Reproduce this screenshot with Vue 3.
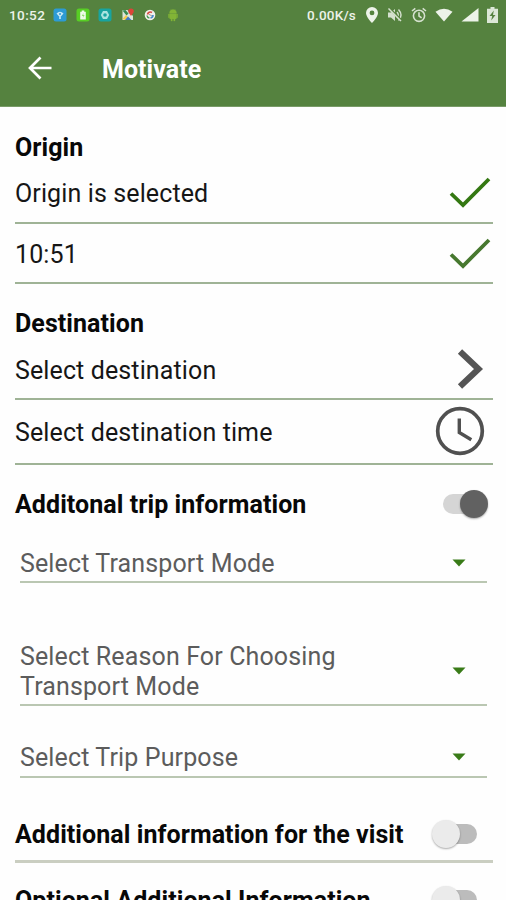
<script setup>
const selects = [
  { key: 'mode', lines: ['Select Transport Mode'] },
  { key: 'reason', lines: ['Select Reason For Choosing', 'Transport Mode'] },
  { key: 'purpose', lines: ['Select Trip Purpose'] }
]
</script>

<template>
  <div class="screen">
    <header class="appbar">
      <div class="status">
        <span class="clock">10:52</span>
        <div class="apps">
          <svg width="14" height="14" viewBox="0 0 14 14"><rect x=".5" y=".5" width="13" height="13" rx="2.5" fill="#2d9bd5" /><path d="M3.5 5.5Q7 2 10.5 5.5L7 9.5Z" fill="#c7e9f7" /><circle cx="7" cy="6" r="1" fill="#2d9bd5" /><path d="M6 9h2v2H6z" fill="#a5dcf3" /></svg>
          <svg width="14" height="14" viewBox="0 0 14 14"><rect x=".5" y=".5" width="13" height="13" rx="2.5" fill="#58ce25" /><path d="M5.7 2.5h2.6v1.2h1.5v7.8H4.2V3.7h1.5z" fill="#effbe9" /><path d="M7.5 5L5.8 8h1.5L6.8 10 8.6 7H7.2z" fill="#8fdc6c" /></svg>
          <svg width="14" height="14" viewBox="0 0 14 14"><rect x=".5" y=".5" width="13" height="13" rx="2.5" fill="#18a4a0" /><path d="M5 3h4l2.2 4L9 11H5L2.8 7z" fill="#a9e4df" /><circle cx="7" cy="7" r="1.8" fill="#18a4a0" /></svg>
          <svg width="14" height="14" viewBox="0 0 14 14"><path d="M1.5 2h5L12 8v4H1.5z" fill="#dce4d9" /><path d="M1.5 2.5l3-.5 3 3.5-2 2z" fill="#378b50" /><path d="M1.5 11l3.5-4 2 2-2.5 3z" fill="#f2ca4c" /><path d="M4 12l3-3.5 3.5 3.5z" fill="#3e78c5" /><path d="M10 8C8 5 7.2 4.4 7.2 3.3a2.8 2.8 0 015.6 0c0 1.3-.8 1.7-2.8 4.7z" fill="#db4439" /></svg>
          <svg width="14" height="14" viewBox="0 0 14 14"><circle cx="7" cy="7" r="5.3" fill="#f1f0eb" /><path d="M4.5 6.5a3 3 0 014.5-2" fill="none" stroke="#d84b45" stroke-width="1.6" /><path d="M10 7a3 3 0 01-2.5 3" fill="none" stroke="#468bcb" stroke-width="1.6" /><path d="M4 7.5A3 3 0 006.4 10" fill="none" stroke="#459b58" stroke-width="1.5" /><path d="M6 6.3l3 1.7" stroke="#999" /></svg>
          <svg width="14" height="14" viewBox="0 0 14 14"><path d="M3.5 5a3.5 3.5 0 017 0zM3.5 5.6h7V10q0 1-1 1H9v2H7.7v-2H6.3v2H5v-2h-.5q-1 0-1-1zM2.4 6h.8v3.7h-.8zM10.8 6h.8v3.7h-.8zM4.6 1l.8 1.5M9.4 1l-.8 1.5" fill="#82b436" stroke="#82b436" stroke-width=".3" /></svg>
        </div>
        <span class="rate">0.00K/s</span>
        <div class="system">
          <svg width="14" height="18" viewBox="0 0 14 18"><path fill-rule="evenodd" d="M7 1a6 6 0 00-6 6c0 4 6 10 6 10s6-6 6-10a6 6 0 00-6-6zm0 3.5a2.4 2.4 0 110 4.8 2.4 2.4 0 010-4.8z" fill="#edf3e9" /></svg>
          <svg width="16" height="16" viewBox="0 0 16 16"><path d="M1 5.5h3L8 2v12l-4-3.5H1z" fill="#d5e1cf" /><path d="M10 5q2.5 3 0 6M11.5 2.5q5 5.5 0 11" fill="none" stroke="#d5e1cf" stroke-width="1.4" /><path d="M2 1l13 13" stroke="#55823f" stroke-width="2.4" /><path d="M1.5 1.5L14 14" stroke="#d5e1cf" stroke-width="1.5" /></svg>
          <svg width="16" height="16" viewBox="0 0 16 16" fill="none" stroke="#d5e1cf" stroke-width="1.6"><circle cx="8" cy="8.8" r="5.6" /><path d="M8 5.3V9l2.6 1.8M1 4l3.3-2.7M15 4l-3.3-2.7" /></svg>
          <svg width="18" height="14" viewBox="0 0 18 14"><path d="M.5 3.8Q9-2.4 17.5 3.8L9 13.5z" fill="#edf3e9" /></svg>
          <svg width="18" height="14" viewBox="0 0 18 14"><path d="M17.5 0v13.5H.5z" fill="#edf3e9" /></svg>
          <svg width="11" height="16" viewBox="0 0 11 16"><path d="M3.5 0h4v1.8H11V16H0V1.8h3.5z" fill="#dce7d7" /><path d="M6.8 3.5L2.5 9h2.7l-1 4.5L8.5 8H6z" fill="#55823f" /></svg>
        </div>
      </div>
      <div class="toolbar">
        <svg class="back" width="24" height="24" viewBox="0 0 24 24"><path d="M23.5 12H2M12.5 1.5L2 12l10.5 10.5" fill="none" stroke="#fff" stroke-width="2.7" /></svg>
        <h1>Motivate</h1>
      </div>
    </header>

    <main>
      <section class="group">
        <h2>Origin</h2>
        <div class="row">
          <span>Origin is selected</span>
          <svg class="check" width="42" height="34" viewBox="0 0 42 34"><path d="M2 17.5l12 11.5L40 3" fill="none" stroke="#347812" stroke-width="3.8" /></svg>
        </div>
        <div class="row second">
          <span class="lower">10:51</span>
          <svg class="check" width="42" height="34" viewBox="0 0 42 34"><path d="M2 17.5l12 11.5L40 3" fill="none" stroke="#47782f" stroke-width="3.8" /></svg>
        </div>
      </section>

      <section class="group">
        <h2>Destination</h2>
        <div class="row">
          <span class="lower">Select destination</span>
          <svg class="chevron" width="28" height="42" viewBox="0 0 28 42"><path d="M3 3.5L21.5 21 3 38.5" fill="none" stroke="#555" stroke-width="6.2" /></svg>
        </div>
        <div class="row tall">
          <span class="lower">Select destination time</span>
          <svg class="dial" width="50" height="50" viewBox="0 0 50 50" fill="none" stroke="#505050"><circle cx="25" cy="25" r="22.3" stroke-width="3.7" /><path d="M24.3 12.5v14l12 7.2" stroke-width="3.4" /></svg>
        </div>
      </section>

      <section>
        <div class="toggle-row">
          <h2>Additonal trip information</h2>
          <span class="switch on"><i class="thumb"></i></span>
        </div>
        <div v-for="s in selects" :key="s.key" class="select" :class="s.key">
          <div class="options"><div v-for="l in s.lines" :key="l">{{ l }}</div></div>
          <svg class="caret" width="14" height="8" viewBox="0 0 14 8"><path d="M.5 .5h13L7 7.5z" fill="#397b18" /></svg>
        </div>
      </section>

      <div class="toggle-row visit">
        <h2>Additional information for the visit</h2>
        <span class="switch"><i class="thumb"></i></span>
      </div>
      <div class="toggle-row optional">
        <h2>Optional Additional Information</h2>
        <span class="switch"><i class="thumb"></i></span>
      </div>
    </main>
  </div>
</template>

<style>
body { margin: 0; background: #fefefe; }
</style>

<style scoped>
* { box-sizing: border-box; }
.screen { width: 506px; height: 900px; overflow: hidden; background: #fefefe; font-family: Roboto, sans-serif; color: #161616; white-space: nowrap; }
svg { display: block; flex: none; }
h1, h2 { margin: 0; font-weight: 700; }
.appbar { height: 107px; background: #55823f; border-bottom: 1px solid #799b68; color: #fff; }
.status { display: flex; align-items: center; height: 29px; padding: 0 8px 0 9px; font-size: 13.5px; font-weight: 500; color: #edf3e9; }
.clock { width: 44px; letter-spacing: .4px; }
.apps { display: flex; gap: 8.5px; }
.rate { margin-left: auto; letter-spacing: .2px; }
.system { display: flex; align-items: center; gap: 8px; margin-left: 9px; }
.toolbar { display: flex; align-items: center; height: 77px; padding-left: 28px; }
.back { margin-top: 1px; }
h1 { margin-left: 50px; font-size: 25px; line-height: 34px; margin-top: 5px; letter-spacing: .05px; }
main { padding: 23px 13px 0 15px; }
h2 { height: 34px; padding-top: 1px; line-height: 34px; font-size: 25px; letter-spacing: .07px; color: #080808; }
.row { display: flex; align-items: center; justify-content: space-between; height: 60px; border-bottom: 2px solid #9fb396; font-size: 25px; letter-spacing: .12px; }
.row span { padding-top: 1px; }
.row .lower { padding-top: 2px; }
.second { padding-top: 1px; }
.tall { height: 65px; }
.group { margin-bottom: 22px; }
.check { margin-right: 2px; }
.chevron { margin-right: 8px; margin-top: -1px; }
.dial { margin-right: 8px; margin-top: -2px; }
.toggle-row { display: flex; align-items: center; justify-content: space-between; height: 34px; }
.switch { position: relative; width: 36px; height: 20px; margin-right: 16px; border-radius: 10px; background: #bcbcbc; }
.thumb { position: absolute; left: -9px; top: -4px; width: 28px; height: 28px; border-radius: 50%; background: #ebebeb; box-shadow: 0 1px 2px #0005; }
.switch.on { margin-right: 14px; background: #d5d5d5; }
.on .thumb { left: 17px; background: #616161; }
.select { display: flex; align-items: center; justify-content: space-between; margin: 0 6px 0 5px; padding-right: 21px; border-bottom: 2px solid #bac7b2; font-size: 25px; line-height: 29.5px; letter-spacing: .13px; color: #5c5c5c; }
.mode { height: 39px; margin-top: 23px; padding-top: 2px; }
.mode .caret { margin-top: -1px; }
.reason { height: 65px; margin-top: 58px; padding-bottom: 2px; }
.reason .caret { margin-top: -1px; }
.purpose { height: 39px; margin-top: 33px; padding-top: 1px; }
.purpose .caret { margin-top: -2px; }
.visit { height: 57px; margin-top: 28px; padding-top: 2px; border-bottom: 3px solid #cacec1; }
.optional { height: 44px; margin-top: 14px; padding-top: 2px; }
</style>
